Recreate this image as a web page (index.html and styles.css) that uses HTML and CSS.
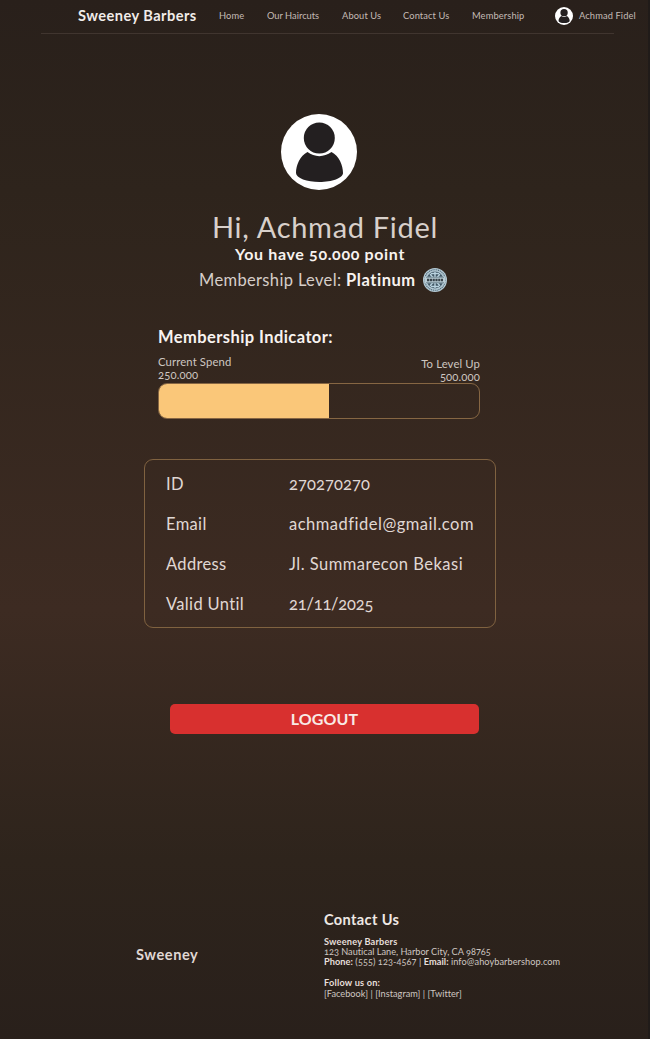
FILE: index.html
```html
<!DOCTYPE html>
<html lang="en">
<head>
<meta charset="utf-8">
<title>Sweeney Barbers - Membership</title>
<link rel="stylesheet" href="styles.css">
</head>
<body>
<svg class="defs" aria-hidden="true">
  <symbol id="person" viewBox="0 0 76 76">
    <circle cx="38" cy="38" r="38" fill="#fff"/>
    <circle cx="38.300" cy="24" r="15.500" fill="#231f20"/>
    <path d="M26.500 38C19 42 15 51 15 59C15 64 26 68 38.500 68C51 68 62 64 62 59C62 51 58 42 50.500 38C43 43.500 33.500 43.500 26.500 38Z" fill="#231f20"/>
  </symbol>
</svg>
<header class="header">
  <nav class="nav">
    <a class="brand">Sweeney Barbers</a>
    <a class="link">Home</a>
    <a class="link cuts">Our Haircuts</a>
    <a class="link">About Us</a>
    <a class="link">Contact Us</a>
    <a class="link">Membership</a>
    <svg class="mini"><use href="#person"/></svg>
    <a class="link user">Achmad Fidel</a>
  </nav>
</header>
<main class="main">
  <svg class="avatar"><use href="#person"/></svg>
  <h1 class="greeting">Hi, Achmad Fidel</h1>
  <p class="points">You have 50.000 point</p>
  <p class="level"><span class="level-label">Membership Level:</span><strong class="level-name">Platinum</strong>
    <svg class="seal" viewBox="0 0 24 24">
      <circle cx="12" cy="12" r="12" fill="#b4cad5"/>
      <circle cx="12" cy="12" r="10.300" fill="none" stroke="#526b78" stroke-width="1.100" stroke-dasharray="1.200 .7"/>
      <circle cx="12" cy="12" r="8.400" fill="#3f5563"/>
      <path d="M12 3.800v16.400M7 6l10 12M17 6L7 18M8 5.500h8M8 18.500h8" stroke="#b9d3df" stroke-width="1.400"/>
      <path d="M1.500 8.700h21v6.600h-21z" fill="#b9ccd5"/>
      <path d="M4 12h16" stroke="#38434a" stroke-width="2.600" stroke-dasharray="2.200 .6"/>
      <path d="M3 9.300h18M3 14.700h18" stroke="#4b6571" stroke-width=".6"/>
    </svg>
  </p>
  <section class="indicator">
    <h2 class="indicator-title">Membership Indicator:</h2>
    <div class="labels">
      <p>Current Spend<br>250.000</p>
      <p class="target">To Level Up<br>500.000</p>
    </div>
    <div class="bar"><div class="fill"></div></div>
  </section>
  <dl class="card">
    <dt>ID</dt><dd class="id">270270270</dd>
    <dt>Email</dt><dd class="mail">achmadfidel@gmail.com</dd>
    <dt>Address</dt><dd class="street">Jl. Summarecon Bekasi</dd>
    <dt>Valid Until</dt><dd class="date">21/11/2025</dd>
  </dl>
  <button class="logout">LOGOUT</button>
</main>
<footer class="footer">
  <div class="footer-brand">Sweeney</div>
  <div class="contact">
    <h3 class="contact-title">Contact Us</h3>
    <p class="shop"><b>Sweeney Barbers</b></p>
    <p class="address">123 Nautical Lane, Harbor City, CA 98765</p>
    <p class="reach"><b>Phone:</b> (555) 123-4567 | <b>Email:</b> info@ahoybarbershop.com</p>
    <p class="follow"><b>Follow us on:</b></p>
    <p class="social">[Facebook] | [Instagram] | [Twitter]</p>
  </div>
</footer>
</body>
</html>
```
FILE: styles.css
```css
* { box-sizing: border-box; margin: 0; padding: 0; }
body {
  width: 650px;
  height: 1039px;
  overflow: hidden;
  display: flex;
  flex-direction: column;
  font-family: Lato, "Open Sans", sans-serif;
  font-variant-numeric: oldstyle-nums;
  font-variant-ligatures: no-common-ligatures;
  color: #e0d8d4;
  background: linear-gradient(#29201b 0, #2e241c 190px, #3d2b22 610px, #2e241c 860px, #29201b 1039px);
  border-right: 2px solid #201b19;
  white-space: nowrap;
}
.defs { position: absolute; width: 0; height: 0; }
.header { height: 34px; margin: 0 34px 0 41px; border-bottom: 1px solid #40352f; }
.nav {
  display: grid;
  grid-template-columns: 141px 48px 75px 61px 69px 83px 24px 65px;
  align-items: center;
  width: 566px;
  height: 31px;
  margin-left: 37px;
}
.brand { font-size: 14.6px; font-weight: 700; letter-spacing: .45px; color: #f1ece9; }
.link { font-size: 9.3px; letter-spacing: .12px; color: #c4bbb6; }
.cuts { letter-spacing: 0; }
.mini { width: 18px; height: 18px; }
.main { display: flex; flex-direction: column; align-items: center; width: 650px; padding-top: 80px; }
.avatar { width: 76px; height: 76px; margin-right: 12px; }
.greeting { margin-top: 19px; font-size: 29px; font-weight: 400; line-height: 36px; letter-spacing: .7px; color: #d8d0cb; }
.points { margin: 1px 10px 0 0; font-size: 16px; font-weight: 700; line-height: 16px; letter-spacing: .65px; color: #f8f3f0; }
.level { display: flex; align-items: center; height: 24px; width: 248px; margin: 6px 4px 0 0; font-size: 16.5px; letter-spacing: .35px; }
.level-label { width: 147px; color: #d6cec9; }
.level-name { width: 77px; letter-spacing: .55px; color: #f8f3f0; }
.seal { width: 24px; height: 24px; }
.indicator { width: 322px; margin: 34px 12px 0 0; }
.indicator-title { font-size: 16.5px; line-height: 22px; font-weight: 700; letter-spacing: .42px; color: #f8f3f0; }
.labels { display: flex; justify-content: space-between; height: 35px; padding-top: 8px; font-size: 11.3px; line-height: 12.5px; letter-spacing: .12px; color: #cec6c1; }
.target { margin-top: 2px; text-align: right; }
.bar { height: 36px; overflow: hidden; border: 1px solid #866643; border-radius: 9px; }
.fill { width: 170px; height: 36px; margin-top: -1px; background: #fac779; }
.card {
  display: grid;
  grid-template-columns: 123px 1fr;
  grid-auto-rows: 40px;
  align-items: center;
  width: 352px;
  height: 169px;
  margin: 40px 10px 0 0;
  padding: 4px 0 0 21px;
  border: 1px solid #806240;
  border-radius: 9px;
  font-size: 16.5px;
  letter-spacing: .35px;
}
.id { letter-spacing: .1px; }
.mail { letter-spacing: .5px; }
.street { letter-spacing: .48px; }
.date { letter-spacing: -.2px; }
.logout { width: 309px; height: 30px; margin: 76px 1px 0 0; padding-bottom: 1px; border: 0; border-radius: 5px; background: #d8302f; color: #f8eae6; font: 700 16px Lato, sans-serif; letter-spacing: .1px; }
.footer { display: grid; grid-template-columns: 188px 1fr; align-items: start; padding: 176px 0 0 136px; }
.footer-brand { margin-top: 35px; font-size: 14.6px; line-height: 20px; font-weight: 700; letter-spacing: .55px; }
.contact { font-size: 9.2px; line-height: 10.4px; letter-spacing: .2px; color: #cec6c1; }
.contact-title { margin-bottom: 6.5px; font-size: 14.6px; line-height: 20px; letter-spacing: .35px; color: #eee8e4; }
.contact b { color: #e6dfda; }
.address { letter-spacing: 0; }
.reach { letter-spacing: .06px; }
.follow { margin-top: 10.4px; }
.social { letter-spacing: .02px; }
```
